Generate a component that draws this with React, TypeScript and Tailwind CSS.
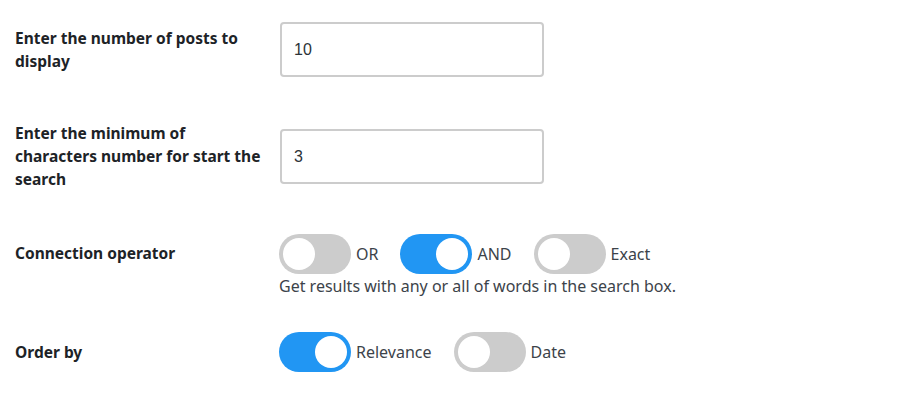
import React from "react";

function Toggle({ on, label }: { on: boolean; label: string }) {
  return (
    <label className="flex items-center">
      <span
        className={
          on
            ? "flex h-[40px] w-[72px] items-center justify-end rounded-full bg-[#2196f3] px-[4px]"
            : "flex h-[40px] w-[72px] items-center justify-start rounded-full bg-[#cccccc] px-[4px]"
        }
      >
        <span className="block h-[32px] w-[32px] rounded-full bg-white" />
      </span>
      <span className="ml-[5px] text-[16px] leading-[22px] text-[#3c434a]">{label}</span>
    </label>
  );
}

export default function App() {
  return (
    <div className="min-h-[395px] w-[900px] bg-white pl-[15px] pt-[22px] font-['Noto_Sans',sans-serif] text-[#1d2327]">
      <div className="flex items-center">
        <div className="w-[265px] pr-[15px] text-[15.5px] font-bold leading-[23px]">
          Enter the number of posts to display
        </div>
        <div className="flex h-[55px] w-[264px] items-center rounded-[4px] border-2 border-[#cccccc] px-[12px] font-['Liberation_Sans',sans-serif] text-[16px] text-[#2c3338]">
          10
        </div>
      </div>

      <div className="mt-[45px] flex items-center">
        <div className="w-[265px] pr-[15px] text-[15.5px] font-bold leading-[23px]">
          Enter the minimum of characters number for start the search
        </div>
        <div className="flex h-[55px] w-[264px] items-center rounded-[4px] border-2 border-[#cccccc] px-[12px] font-['Liberation_Sans',sans-serif] text-[16px] text-[#2c3338]">
          3
        </div>
      </div>

      <div className="mt-[43px] flex items-start">
        <div className="mt-[8px] w-[264px] text-[15.5px] font-bold leading-[23px]">Connection operator</div>
        <div className="flex flex-col">
          <div className="flex items-center gap-[22px]">
            <Toggle on={false} label="OR" />
            <Toggle on={true} label="AND" />
            <Toggle on={false} label="Exact" />
          </div>
          <p className="mt-[1px] text-[16px] leading-[22px] text-[#3c434a]">
            Get results with any or all of words in the search box.
          </p>
        </div>
      </div>

      <div className="mt-[35px] flex items-center">
        <div className="w-[264px] text-[15.5px] font-bold leading-[23px]">Order by</div>
        <div className="flex items-center gap-[22px]">
          <Toggle on={true} label="Relevance" />
          <Toggle on={false} label="Date" />
        </div>
      </div>
    </div>
  );
}
